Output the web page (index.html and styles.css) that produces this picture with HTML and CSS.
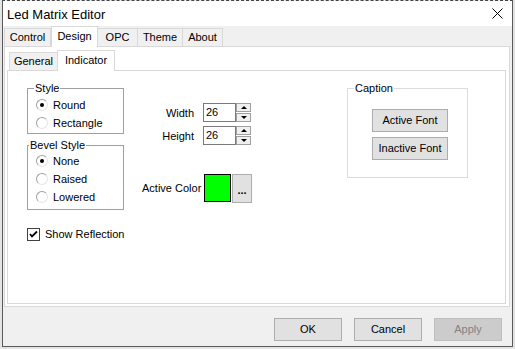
FILE: index.html
```html
<!DOCTYPE html>
<html lang="en">
<head>
    <meta charset="UTF-8">
    <title>Led Matrix Editor</title>
    <link rel="stylesheet" href="styles.css">
</head>
<body>
    <div class="window">
        <!-- Barra de título -->
        <div class="titlebar">
            <span class="title">Led Matrix Editor</span>
            <svg class="close" width="11" height="11" viewBox="0 0 11 11">
                <path d="M0.5 0.5 L10.5 10.5 M10.5 0.5 L0.5 10.5" stroke="#000" stroke-width="1" fill="none"/>
            </svg>
        </div>

        <!-- Abas principais -->
        <div class="tab-row outer-tabs">
            <div class="tab tab-control">Control</div>
            <div class="tab tab-design active">Design</div>
            <div class="tab tab-opc">OPC</div>
            <div class="tab tab-theme">Theme</div>
            <div class="tab tab-about">About</div>
        </div>
        <div class="panel outer-panel">
            <div class="tab-row inner-tabs">
                <div class="tab tab-general">General</div>
                <div class="tab tab-indicator active">Indicator</div>
            </div>
            <div class="panel inner-panel">
                <div class="col-left">
                    <fieldset class="group group-style">
                        <legend>Style</legend>
                        <div class="radio-row"><span class="radio on"></span>Round</div>
                        <div class="radio-row"><span class="radio"></span>Rectangle</div>
                    </fieldset>
                    <fieldset class="group group-bevel">
                        <legend>Bevel Style</legend>
                        <div class="radio-row"><span class="radio on"></span>None</div>
                        <div class="radio-row"><span class="radio"></span>Raised</div>
                        <div class="radio-row"><span class="radio"></span>Lowered</div>
                    </fieldset>
                    <div class="check-row">
                        <span class="checkbox">
                            <svg width="11" height="11" viewBox="0 0 11 11">
                                <path d="M2 5 L4 7.5 L9 2.5" stroke="#000" stroke-width="1.8" fill="none"/>
                            </svg>
                        </span>
                        Show Reflection
                    </div>
                </div>

                <div class="col-middle">
                    <div class="field-row">
                        <span class="field-label">Width</span>
                        <span class="edit">26</span>
                        <span class="spin">
                            <span class="spin-btn up"></span>
                            <span class="spin-btn down"></span>
                        </span>
                    </div>
                    <div class="field-row second">
                        <span class="field-label">Height</span>
                        <span class="edit">26</span>
                        <span class="spin">
                            <span class="spin-btn up"></span>
                            <span class="spin-btn down"></span>
                        </span>
                    </div>
                    <div class="color-row">
                        <span class="color-label">Active Color</span>
                        <span class="swatch"></span>
                        <span class="btn dots">...</span>
                    </div>
                </div>

                <div class="col-right">
                    <fieldset class="group group-caption">
                        <legend>Caption</legend>
                        <div class="btn font-btn">Active Font</div>
                        <div class="btn font-btn">Inactive Font</div>
                    </fieldset>
                </div>
            </div>
        </div>

        <!-- Botões -->
        <div class="footer">
            <div class="btn dlg-btn">OK</div>
            <div class="btn dlg-btn">Cancel</div>
            <div class="btn dlg-btn disabled">Apply</div>
        </div>
    </div>
</body>
</html>
```

FILE: styles.css
```css
/* Reset */
* {
    margin: 0;
    padding: 0;
    box-sizing: border-box;
}

body {
    font-family: "Liberation Sans", Arial, sans-serif;
    font-size: 11px;
    color: #000;
    background-color: #e4e4e4;
}

.window {
    width: 511px;
    height: 347px;
    margin-left: 2px;
    border: 1px solid #5a5a5a;
    border-top: 1px dashed #444;
    background-color: #f0f0f0;
    display: flex;
    flex-direction: column;
}

/* Barra de título */
.titlebar {
    height: 25px;
    background-color: #fff;
    display: flex;
    align-items: center;
    justify-content: space-between;
    padding: 0 9px 0 4px;
}

.title {
    font-size: 13px;
    padding-top: 1px;
}

.close {
    display: block;
}

/* Abas */
.tab-row {
    display: flex;
    align-items: flex-end;
    height: 20px;
}

.outer-tabs {
    margin-left: 1px;
}

.inner-tabs {
    margin-left: 2px;
}

.tab {
    height: 18px;
    line-height: 17px;
    text-align: center;
    border: 1px solid #d9d9d9;
    border-bottom: none;
    background-color: #f0f0f0;
}

.tab.active {
    height: 21px;
    line-height: 18px;
    background-color: #fff;
    margin-bottom: -1px;
    position: relative;
    z-index: 1;
}

.tab-control { width: 47px; }
.tab-design { width: 47px; }
.tab-opc { width: 41px; margin-left: -1px; }
.tab-theme { width: 46px; margin-left: -1px; }
.tab-about { width: 41px; margin-left: -1px; }

.tab-general { width: 49px; }
.tab-indicator { width: 58px; margin-left: -1px; }

.inner-tabs .tab {
    background-color: #f0f0f0;
}

.inner-tabs .tab.active {
    background-color: #fff;
}

.panel {
    background-color: #fff;
    border: 1px solid #d9d9d9;
}

.outer-panel {
    width: 506px;
    height: 261px;
    margin-left: 1px;
    padding: 3px 3px 2px 2px;
}

.inner-panel {
    height: 234px;
    display: flex;
    align-items: flex-start;
    padding: 11px 0 0 19px;
}

/* Group boxes */
.group {
    border: 1px solid #a0a0a0;
}

.group legend {
    line-height: 12px;
    padding: 0 1px;
}

.col-left {
    width: 97px;
}

.group-style {
    padding: 2px 0 1px 8px;
}

.group-style legend {
    margin-left: -2px;
}

.group-bevel {
    margin-top: 5px;
    padding: 1px 0 3px 8px;
}

.group-bevel legend {
    margin-left: -7px;
}

.radio-row {
    height: 18px;
    display: flex;
    align-items: center;
}

.radio {
    width: 12px;
    height: 12px;
    border-radius: 50%;
    border: 1px solid;
    border-color: #a0a0a0 #e6e6e6 #e6e6e6 #a0a0a0;
    background-color: #fff;
    margin-right: 5px;
    display: flex;
    align-items: center;
    justify-content: center;
}

.radio.on::after {
    content: "";
    width: 4px;
    height: 4px;
    border-radius: 50%;
    background-color: #000;
}

.check-row {
    margin-top: 15px;
    height: 18px;
    display: flex;
    align-items: center;
    white-space: nowrap;
}

.checkbox {
    width: 13px;
    height: 13px;
    border: 1px solid #404040;
    background-color: #fff;
    margin-right: 5px;
    display: flex;
    align-items: center;
    justify-content: center;
}

.checkbox svg {
    display: block;
}

/* Coluna do meio */
.col-middle {
    width: 110px;
    margin-left: 18px;
    padding-top: 21px;
}

.field-row {
    height: 19px;
    display: flex;
    align-items: center;
}

.field-row.second {
    margin-top: 4px;
}

.field-label {
    width: 52px;
    text-align: right;
    margin-right: 9px;
}

.edit {
    width: 33px;
    height: 19px;
    border: 1px solid #7a7a7a;
    padding-left: 2px;
    line-height: 16px;
}

.spin {
    width: 15px;
    height: 19px;
    display: flex;
    flex-direction: column;
    justify-content: space-between;
}

.spin-btn {
    height: 9px;
    border: 1px solid #a0a0a0;
    background-color: #f0f0f0;
    display: flex;
    align-items: center;
    justify-content: center;
}

.spin-btn::after {
    content: "";
    border-left: 3px solid transparent;
    border-right: 3px solid transparent;
}

.spin-btn.up::after {
    border-bottom: 3px solid #000;
}

.spin-btn.down::after {
    border-top: 3px solid #000;
}

.color-row {
    margin-top: 29px;
    display: flex;
    align-items: flex-start;
}

.color-label {
    width: 62px;
    line-height: 28px;
    white-space: nowrap;
}

.swatch {
    width: 27px;
    height: 28px;
    border: 1px solid #000;
    background-color: #00ff00;
}

/* Botões */
.btn {
    background-color: #e1e1e1;
    border: 1px solid #adadad;
    text-align: center;
}

.dots {
    width: 20px;
    height: 29px;
    margin-left: 1px;
    font-weight: bold;
    line-height: 30px;
}

.col-right {
    margin-left: 95px;
}

.group-caption {
    width: 121px;
    border-color: #dcdcdc;
    padding: 15px 0 17px 24px;
}

.group-caption legend {
    margin-left: -18px;
}

.font-btn {
    width: 76px;
    height: 23px;
    line-height: 21px;
}

.font-btn + .font-btn {
    margin-top: 5px;
}

.footer {
    flex: 1;
    display: flex;
    justify-content: flex-end;
    gap: 12px;
    padding: 11px 10px 0 0;
}

.dlg-btn {
    width: 68px;
    height: 23px;
    line-height: 21px;
}

.dlg-btn.disabled {
    background-color: #cccccc;
    border-color: #bfbfbf;
    color: #838383;
}
```
